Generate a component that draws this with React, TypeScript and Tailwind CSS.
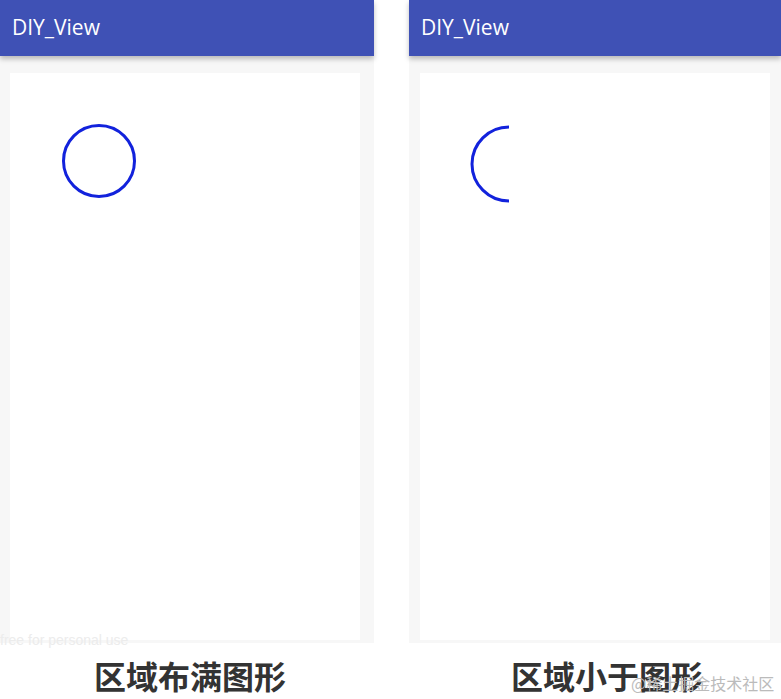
import React from "react";

function Phone({ children, pad }: { children: React.ReactNode; pad: string }) {
  return (
    <div className="flex h-[643px] flex-col bg-[#f7f7f7]">
      <div className="relative z-10 flex h-[56px] items-center bg-[#3f51b5] pl-[12px] text-[21px] text-white shadow-[0_3px_5px_rgba(0,0,0,0.25)] [font-family:'Open_Sans','Noto_Sans',sans-serif]">
        DIY_View
      </div>
      <div className={`flex-1 pt-[17px] pb-[3px] ${pad}`}>
        <div className="relative h-full bg-white">{children}</div>
      </div>
    </div>
  );
}

export default function App() {
  return (
    <div className="relative h-[699px] w-[781px] overflow-hidden bg-white [font-family:'Noto_Sans','Noto_Sans_CJK_SC',sans-serif]">
      <div className="flex gap-[35px]">
        <div className="w-[374px]">
          <Phone pad="pl-[10px] pr-[14px]">
            <svg width="350" height="200" className="block">
              <circle cx="89" cy="88" r="35.5" fill="none" stroke="#1222dc" strokeWidth="3" />
            </svg>
          </Phone>
        </div>
        <div className="w-[372px] shrink-0">
          <Phone pad="pl-[11px] pr-[11px]">
            <svg width="350" height="200" className="block">
              <path d="M 89 54 A 37 37 0 0 0 89 128" fill="none" stroke="#1222dc" strokeWidth="3" />
            </svg>
          </Phone>
        </div>
      </div>
      <div className="absolute left-0 top-[630px] text-[14px] text-[#ececec] [font-family:'Liberation_Sans',sans-serif]">
        free for personal use
      </div>
      <div className="flex">
        <div className="w-[380px] shrink-0 pt-[12px] text-center text-[32px] font-bold leading-[40px] text-[#333] [font-family:'Noto_Sans_CJK_SC',sans-serif]">
          区域布满图形
        </div>
        <div className="flex-1 pl-[53px] pt-[12px] text-center text-[32px] font-bold leading-[40px] text-[#333] [font-family:'Noto_Sans_CJK_SC',sans-serif]">
          区域小于图形
        </div>
      </div>
      <div className="absolute left-[631px] top-[671px] text-[16px] text-[#bbbbbb] [font-family:'Noto_Sans_CJK_SC',serif]">
        @稀土掘金技术社区
      </div>
    </div>
  );
}
